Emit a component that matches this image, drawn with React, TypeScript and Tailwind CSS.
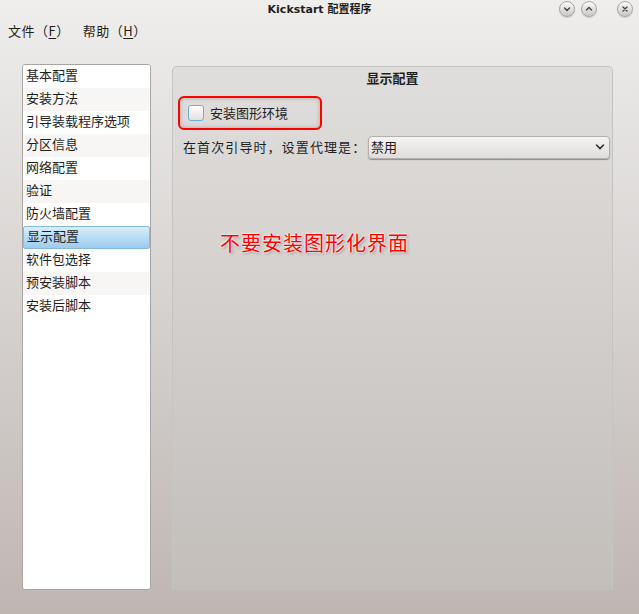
import React from "react";

const items = [
  "基本配置",
  "安装方法",
  "引导装载程序选项",
  "分区信息",
  "网络配置",
  "验证",
  "防火墙配置",
  "显示配置",
  "软件包选择",
  "预安装脚本",
  "安装后脚本",
];

function WinBtn({ kind }: { kind: "min" | "max" | "close" }) {
  return (
    <div className="w-[16px] h-[16px] rounded-full bg-gradient-to-b from-[#fbfbfb] to-[#c9c7c6] border border-[#a9a7a6] shadow-[0_1px_1px_rgba(0,0,0,0.15)] flex items-center justify-center">
      <svg width="8" height="8" viewBox="0 0 8 8" fill="none" stroke="#444" strokeWidth="1.4" strokeLinecap="round">
        {kind === "min" && <path d="M1.5 3 L4 5.5 L6.5 3" />}
        {kind === "max" && <path d="M1.5 5 L4 2.5 L6.5 5" />}
        {kind === "close" && <path d="M2 2 L6 6 M6 2 L2 6" />}
      </svg>
    </div>
  );
}

export default function App() {
  return (
    <div
      className="w-[639px] h-[614px] overflow-hidden flex flex-col bg-gradient-to-b from-[#efeeed] via-[#d6d2d0] to-[#bfb6b2] text-[#1e1e1e]"
      style={{ fontFamily: '"Noto Sans CJK SC", "DejaVu Sans", sans-serif' }}
    >
      {/* title bar */}
      <div className="h-[20px] relative flex items-center justify-center">
        <span className="text-[11px] font-bold leading-none pb-[2px]" style={{ fontFamily: '"DejaVu Sans", "Noto Sans CJK SC", sans-serif' }}>
          Kickstart 配置程序
        </span>
        <div className="absolute right-[6px] top-[1px] flex items-center">
          <div className="mr-[6px]"><WinBtn kind="min" /></div>
          <div className="mr-[20px]"><WinBtn kind="max" /></div>
          <WinBtn kind="close" />
        </div>
      </div>
      {/* menu bar */}
      <div className="h-[22px] flex items-center pl-[8px] gap-[13px] text-[13px] leading-none pb-[2px]">
        <span className="tracking-[0.5px]">文件（<span className="underline underline-offset-2">F</span>）</span>
        <span className="tracking-[0.5px]">帮助（<span className="underline underline-offset-2">H</span>）</span>
      </div>
      {/* content */}
      <div className="flex pl-[22px] pt-[22px]">
        {/* list */}
        <div className="w-[129px] h-[526px] bg-white border border-[#a9a5a3] rounded-[3px] overflow-hidden flex flex-col text-[13px]">
          {items.map((it, i) => {
            const sel = it === "显示配置";
            return (
              <div
                key={it}
                className={
                  "h-[23px] flex items-center pl-[3px] pb-[4px] leading-none whitespace-nowrap " +
                  (sel
                    ? "bg-gradient-to-b from-[#d8eefc] to-[#9ccbee] border border-[#86b9de] rounded-[2px] pl-[2px]"
                    : i % 2 === 1
                    ? "bg-[#f7f6f5]"
                    : "bg-white")
                }
              >
                {it}
              </div>
            );
          })}
        </div>
        {/* panel */}
        <div className="ml-[21px] mt-[2px] w-[441px] h-[524px] rounded-t-[5px] border-t border-x border-[#c7c3c1] bg-gradient-to-b from-[#e0dedc] to-[#c3beba] flex flex-col text-[13px]">
          <div className="h-[22px] flex items-center justify-center font-bold pb-[2px] leading-none">显示配置</div>
          <div className="ml-[5px] mt-[7px] w-[144px] h-[34px] rounded-[6px] border-2 border-[#ff0000] shadow-[inset_0_0_4px_rgba(0,0,0,0.25)] flex items-center pl-[8px]">
            <div className="w-[16px] h-[16px] rounded-[3px] border border-[#6cb0da] bg-gradient-to-b from-[#ffffff] to-[#e3e1df]" />
            <span className="ml-[6px] leading-none pb-[2px]">安装图形环境</span>
          </div>
          <div className="flex items-center mt-[5px] ml-[10px] h-[24px]">
            <span className="leading-none w-[185px] tracking-[1.1px] pb-[2px]">在首次引导时，设置代理是：</span>
            <div className="w-[242px] h-[23px] rounded-[4px] border border-[#b4b0ae] bg-gradient-to-b from-[#f5f4f3] to-[#e0dddb] shadow-[0_1px_1px_rgba(0,0,0,0.35)] flex items-center justify-between pl-[2px] pr-[4px]">
              <span className="leading-none pb-[2px]">禁用</span>
              <svg width="10" height="8" viewBox="0 0 10 8" fill="none" stroke="#333" strokeWidth="1.6" strokeLinecap="round">
                <path d="M1.5 2 L5 5.5 L8.5 2" />
              </svg>
            </div>
          </div>
          <div className="mt-[74px] ml-[47px] text-[20px] leading-none text-[#ff0000] tracking-[1px]"
            style={{ textShadow: "0 0 2px #fff, 0 0 2px #fff, 0 0 3px #fff, 1px 1px 3px rgba(0,0,0,0.5)" }}>
            不要安装图形化界面
          </div>
        </div>
      </div>
    </div>
  );
}
